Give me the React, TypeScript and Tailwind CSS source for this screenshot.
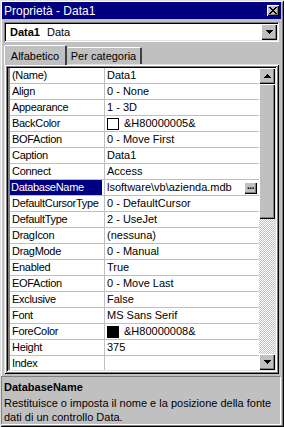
import React from "react";

const raised =
  "shadow-[inset_1px_1px_#dfdfdf,inset_-1px_-1px_#000,inset_2px_2px_#fff,inset_-2px_-2px_#808080]";
const btn =
  "shadow-[inset_1px_1px_#fff,inset_-1px_-1px_#000,inset_-2px_-2px_#808080]";
const sunken =
  "shadow-[inset_1px_1px_#808080,inset_-1px_-1px_#fff,inset_2px_2px_#000,inset_-2px_-2px_#dfdfdf]";

type Row = { name: string; value: string; swatch?: string; selected?: boolean };

const rows: Row[] = [
  { name: "(Name)", value: "Data1" },
  { name: "Align", value: "0 - None" },
  { name: "Appearance", value: "1 - 3D" },
  { name: "BackColor", value: "&H80000005&", swatch: "white" },
  { name: "BOFAction", value: "0 - Move First" },
  { name: "Caption", value: "Data1" },
  { name: "Connect", value: "Access" },
  { name: "DatabaseName", value: "lsoftware\\vb\\azienda.mdb", selected: true },
  { name: "DefaultCursorType", value: "0 - DefaultCursor" },
  { name: "DefaultType", value: "2 - UseJet" },
  { name: "DragIcon", value: "(nessuna)" },
  { name: "DragMode", value: "0 - Manual" },
  { name: "Enabled", value: "True" },
  { name: "EOFAction", value: "0 - Move Last" },
  { name: "Exclusive", value: "False" },
  { name: "Font", value: "MS Sans Serif" },
  { name: "ForeColor", value: "&H80000008&", swatch: "black" },
  { name: "Height", value: "375" },
  { name: "Index", value: "" },
];

function Arrow({ down }: { down?: boolean }) {
  return (
    <svg width="7" height="4" viewBox="0 0 7 4">
      {down ? (
        <path d="M0 0h7v1h-1v1h-1v1h-1v1h-1v-1h-1v-1h-1v-1h-1z" fill="#000" />
      ) : (
        <path d="M3 0h1v1h1v1h1v1h1v1h-7v-1h1v-1h1v-1h1z" fill="#000" />
      )}
    </svg>
  );
}

export default function App() {
  return (
    <div
      className={`w-[284px] h-[427px] bg-[#c0c0c0] flex flex-col pl-[2px] pt-[2px] pr-[3px] pb-[2px] overflow-hidden text-[11px] leading-none text-black font-['Liberation_Sans',Arial,sans-serif] ${raised}`}
    >
      {/* Title bar */}
      <div className="h-[17px] bg-[#000080] flex items-center justify-between pl-[2px] pr-[2px] shrink-0">
        <span className="text-white text-[12px]">Proprietà - Data1</span>
        <div className={`w-[12px] h-[11px] bg-[#c0c0c0] flex items-center justify-center ${btn}`}>
          <svg width="8" height="7" viewBox="0 0 8 7">
            <path
              d="M0 0h2v1h1v1h2v-1h1v-1h2v1h-1v1h-1v1h-1v1h1v1h1v1h1v1h-2v-1h-1v-1h-2v1h-1v1h-2v-1h1v-1h1v-1h1v-1h-1v-1h-1v-1h-1z"
              fill="#000"
            />
          </svg>
        </div>
      </div>

      {/* Combo */}
      <div className={`mt-[3px] mx-[2px] h-[20px] bg-white flex items-center p-[2px] shrink-0 ${sunken}`}>
        <div className="flex-1 flex items-center pl-[4px] gap-[7px]">
          <span className="font-bold">Data1</span>
          <span>Data</span>
        </div>
        <div className={`w-[16px] h-[16px] bg-[#c0c0c0] flex items-center justify-center ${btn}`}>
          <Arrow down />
        </div>
      </div>

      {/* Tabs */}
      <div className="mt-[3px] mx-[2px] h-[19px] flex items-end relative z-10 shrink-0">
        <div className="w-[63px] h-[20px] -mb-[1px] bg-[#c0c0c0] border-l border-t border-white border-r-2 border-r-[#404040] rounded-t-[2px] flex items-center justify-center pt-[1px]">
          <span>Alfabetico</span>
        </div>
        <div className="w-[75px] h-[17px] bg-[#c0c0c0] border-t border-white border-r-2 border-r-[#404040] rounded-t-[2px] flex items-center justify-center">
          <span>Per categoria</span>
        </div>
      </div>

      {/* Tab panel */}
      <div className={`mx-[2px] flex-1 p-[2px] flex flex-col min-h-0 ${raised}`}>
        <div className={`flex-1 flex p-[2px] bg-white min-h-0 ${sunken}`}>
          <div className="flex-1 flex flex-col overflow-hidden border-l-2 border-[#808080]">
            {rows.map((r) => (
              <div key={r.name} className="h-[16px] shrink-0 flex border-b border-[#c0c0c0]">
                <div className="w-[95px] shrink-0 border-r border-[#c0c0c0] flex items-stretch">
                  <div
                    className={`flex items-center pl-[1px] pr-[1px] whitespace-nowrap overflow-hidden tracking-[-0.3px] ${
                      r.selected ? "bg-[#000080] text-white w-[92px]" : "w-[94px] pl-[2px]"
                    }`}
                  >
                    <span>{r.name}</span>
                  </div>
                </div>
                <div className="flex-1 flex items-center pl-[2px] whitespace-nowrap overflow-hidden">
                  {r.swatch && (
                    <span
                      className={`w-[12px] h-[12px] border border-black mr-[5px] shrink-0 ${
                        r.swatch === "black" ? "bg-black" : "bg-white"
                      }`}
                    />
                  )}
                  <span className="flex-1">{r.value}</span>
                  {r.selected && (
                    <div className={`w-[13px] h-[12px] bg-[#c0c0c0] mr-[2px] flex items-end justify-center pb-[3px] shrink-0 ${btn}`}>
                      <span className="text-[10px] font-bold leading-none tracking-[-0.5px]">...</span>
                    </div>
                  )}
                </div>
              </div>
            ))}
          </div>
          {/* Scrollbar */}
          <div className="w-[16px] flex flex-col shrink-0">
            <div className={`h-[16px] bg-[#c0c0c0] flex items-center justify-center shrink-0 ${btn}`}>
              <Arrow />
            </div>
            <div className={`h-[135px] bg-[#c0c0c0] shrink-0 ${btn}`} />
            <div className="flex-1 bg-[image:repeating-conic-gradient(#c0c0c0_0%_25%,#fff_0%_50%)] bg-[length:2px_2px]" />
            <div className={`h-[16px] bg-[#c0c0c0] flex items-center justify-center shrink-0 ${btn}`}>
              <Arrow down />
            </div>
          </div>
        </div>
      </div>

      {/* Description */}
      <div className="mt-[2px] -ml-[1px] h-[49px] shrink-0 border-t border-l border-[#808080] border-b border-r border-b-white border-r-white px-[2px] pt-[5px] flex flex-col">
        <div className="font-bold h-[16px]">DatabaseName</div>
        <div className="h-[16px] flex items-center">Restituisce o imposta il nome e la posizione della fonte</div>
        <div className="h-[14px] flex items-center">dati di un controllo Data.</div>
      </div>
    </div>
  );
}
